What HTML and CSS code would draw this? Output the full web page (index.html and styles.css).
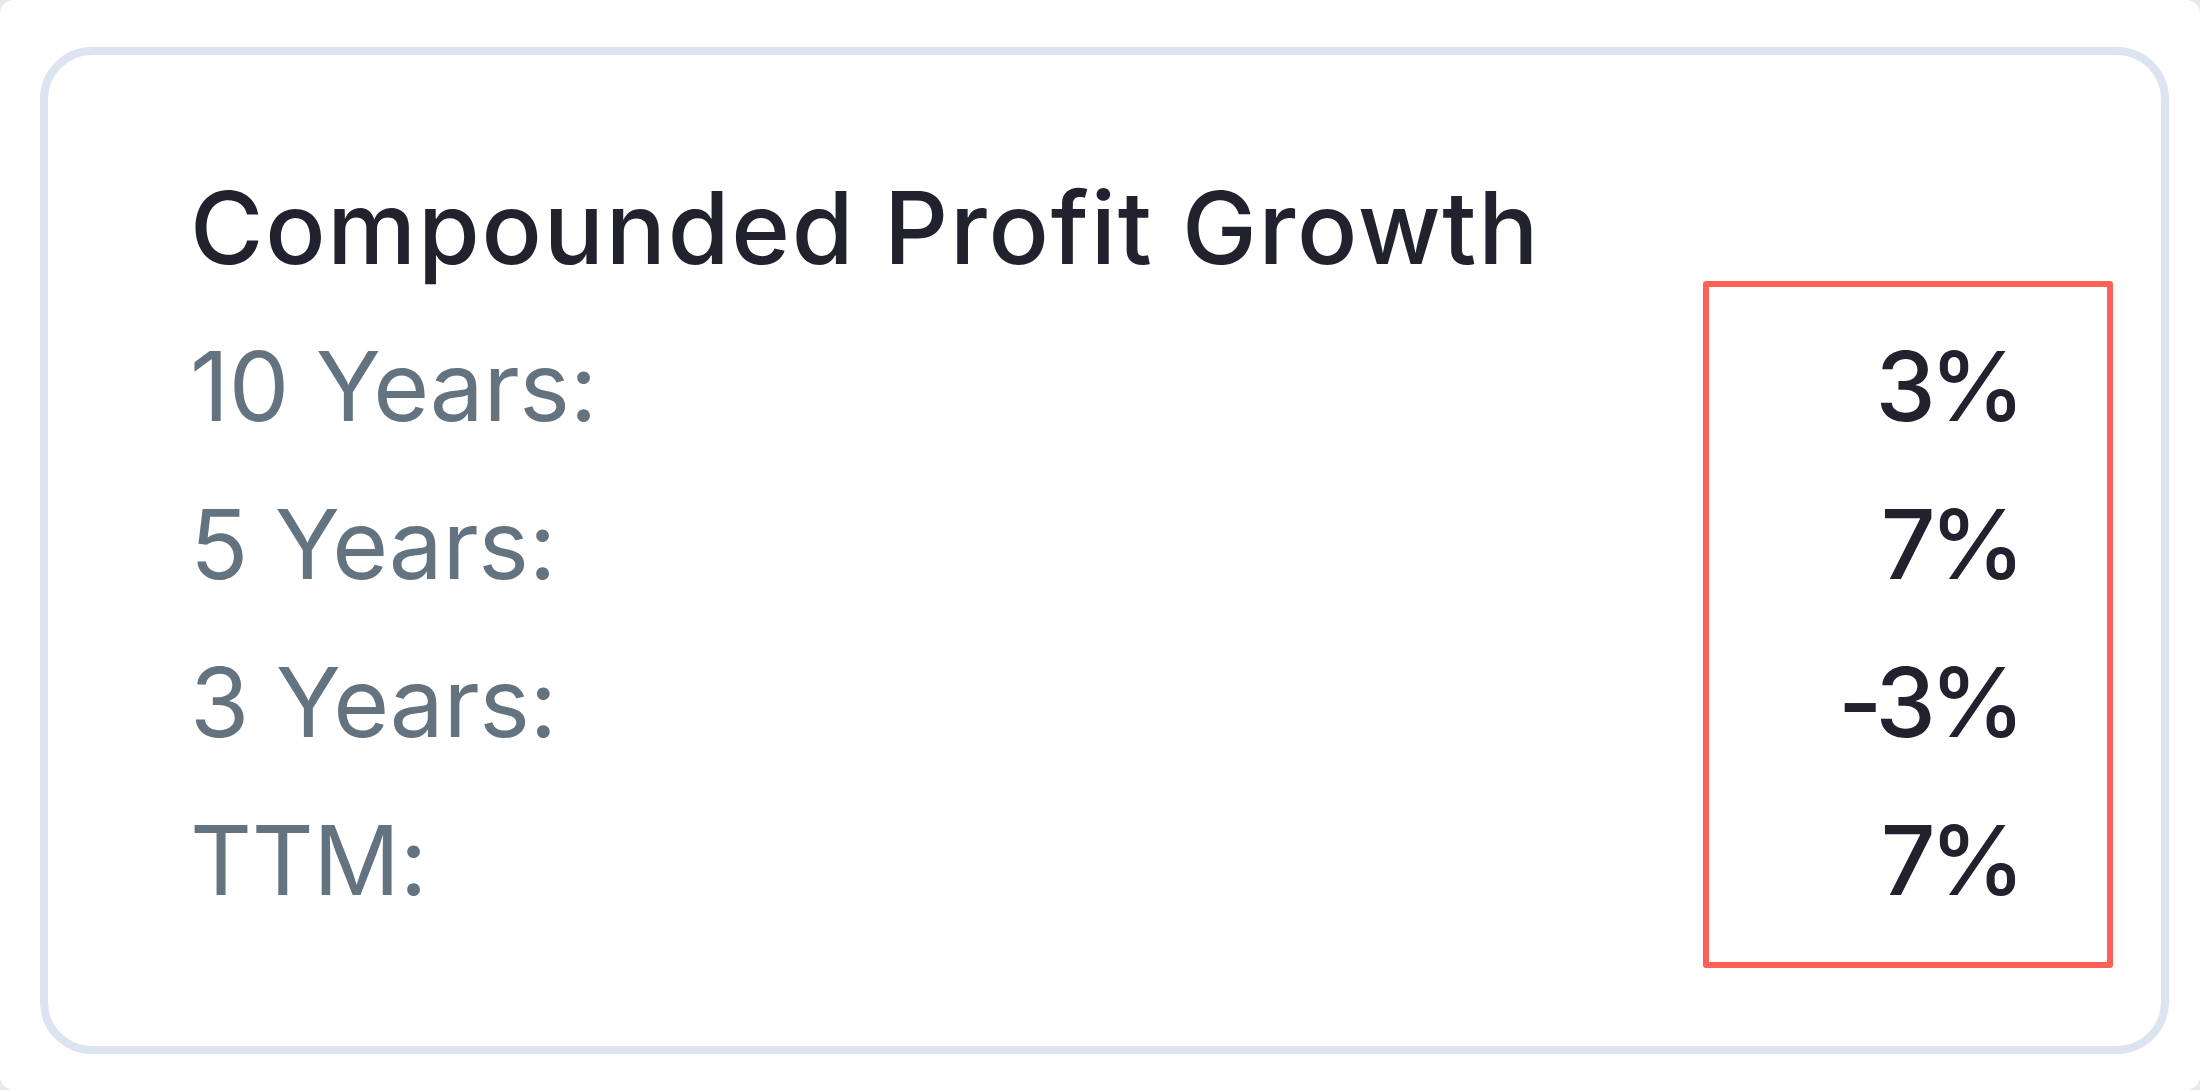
FILE: index.html
```html
<!DOCTYPE html>
<html lang="en">
<head>
<meta charset="utf-8">
<title>Compounded Profit Growth</title>
<link rel="stylesheet" href="styles.css">
</head>
<body>
<div class="page">
  <section class="card">
    <h2 class="card-title">Compounded Profit Growth</h2>
    <div class="stats">
      <div class="label">10 Years:</div><div class="value">3%</div>
      <div class="label">5 Years:</div><div class="value">7%</div>
      <div class="label">3 Years:</div><div class="value">-3%</div>
      <div class="label">TTM:</div><div class="value">7%</div>
      <div class="highlight"></div>
    </div>
  </section>
</div>
</body>
</html>
```
FILE: styles.css
```css
html, body {
  margin: 0;
  padding: 0;
  background: #e9e9ea;
}
.page {
  width: 2200px;
  height: 1090px;
  background: #ffffff;
  border-radius: 14px;
  padding: 47px 31px 0 40px;
  box-sizing: border-box;
  font-family: Inter, "Noto Sans", sans-serif;
}
.card {
  width: 2129px;
  box-sizing: border-box;
  border: 8px solid #dbe4f0;
  border-radius: 52px;
  padding: 113px 142px 107px 142px;
  background: #ffffff;
}
.card-title {
  margin: 0 0 19px 0;
  font-size: 100px;
  line-height: 120px;
  font-weight: 500;
  color: #22212e;
  letter-spacing: 1.8px;
}
.stats {
  position: relative;
  display: grid;
  grid-template-columns: 1fr auto;
}
.label {
  font-size: 96px;
  line-height: 158px;
  font-weight: 400;
  color: #637380;
  letter-spacing: -0.3px;
}
.value {
  font-size: 96px;
  line-height: 158px;
  font-weight: 500;
  color: #22212e;
  text-align: right;
  letter-spacing: -6px;
}
.highlight {
  position: absolute;
  top: -26px;
  right: -94px;
  width: 410px;
  height: 687px;
  box-sizing: border-box;
  border: 6px solid #ff6157;
  border-radius: 3px;
}
```
